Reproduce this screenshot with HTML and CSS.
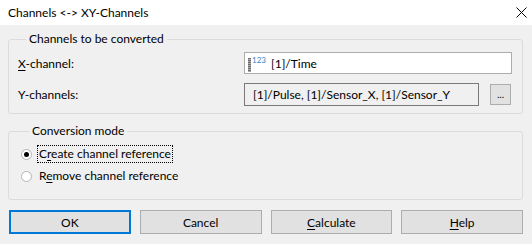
FILE: index.html
```html
<!DOCTYPE html>
<html>
<head>
  <meta charset="UTF-8">
  <title>Channels &lt;-&gt; XY-Channels</title>
  <link rel="stylesheet" href="styles.css">
</head>
<body>
  <div class="titlebar">
    <span class="title">Channels &lt;-&gt; XY-Channels</span>
    <svg class="close" width="11" height="11" viewBox="0 0 11 11">
      <path d="M0.5 0.5 L10.5 10.5 M10.5 0.5 L0.5 10.5" stroke="#000" stroke-width="1" fill="none"/>
    </svg>
  </div>

  <div class="content">
    <fieldset class="group group-channels">
      <legend>Channels to be converted</legend>
      <div class="row">
        <label class="label"><u>X</u>-channel:</label>
        <div class="field field-x">
          <span class="chan-icon"><span class="ruler"></span><span class="num">123</span></span>
          <span class="value">[1]/Time</span>
        </div>
      </div>
      <div class="row row-y">
        <label class="label">Y-channels:</label>
        <div class="field field-y">
          <span class="value">[1]/Pulse, [1]/Sensor_X, [1]/Sensor_Y</span>
        </div>
        <button class="more">...</button>
      </div>
    </fieldset>

    <fieldset class="group group-mode">
      <legend>Conversion mode</legend>
      <div class="radio checked">
        <span class="dot"></span>
        <span class="radio-text focus">C<u>r</u>eate channel reference</span>
      </div>
      <div class="radio">
        <span class="dot"></span>
        <span class="radio-text">R<u>e</u>move channel reference</span>
      </div>
    </fieldset>

    <div class="buttons">
      <button class="btn default">OK</button>
      <button class="btn">Cancel</button>
      <button class="btn"><u>C</u>alculate</button>
      <button class="btn"><u>H</u>elp</button>
    </div>
  </div>
</body>
</html>
```

FILE: styles.css
```css
body {
  margin: 0px;
  background: #f0f0f0;
  color: #000000;
  font-family: Lato, "Noto Sans", sans-serif;
  font-size: 12px;
  width: 532px;
  height: 244px;
  overflow: hidden;
}

u {
  text-decoration: underline;
  text-underline-offset: 2px;
}

.titlebar {
  background: #ffffff;
  height: 25px;
  display: flex;
  align-items: center;
  justify-content: space-between;
  padding: 0px 5px 0px 8px;
}

.title {
  line-height: 16px;
}

.close {
  display: block;
}

.content {
  padding: 0px 9px 0px 8px;
}

.group {
  margin: 0px;
  border: 1px solid #dcdcdc;
  border-radius: 3px;
  min-width: 0;
}

.group legend {
  padding: 0px 3px;
  margin-left: 8px;
  line-height: 16px;
}

.group-channels {
  margin-top: 6px;
  padding: 5px 10px 8px 9px;
}

.row {
  display: flex;
  align-items: center;
  height: 22px;
}

.row-y {
  margin-top: 9px;
}

.label {
  width: 226px;
}

.field {
  height: 22px;
  box-sizing: border-box;
  display: flex;
  align-items: center;
  padding-left: 8px;
}

.field-x {
  flex: 1;
  background: #ffffff;
  border: 1px solid #adadad;
  padding-left: 3px;
}

.field-y {
  width: 235px;
  height: 23px;
  background: #f0f0f0;
  border: 1px solid #7a7a7a;
}

.chan-icon {
  display: flex;
  align-items: flex-start;
  height: 16px;
  width: 23px;
  margin-top: 2px;
}

.ruler {
  width: 3px;
  height: 14px;
  margin-top: 2px;
  background: repeating-linear-gradient(#6d6d6d 0px, #6d6d6d 1px, #a9a9a9 1px, #a9a9a9 2px);
}

.num {
  color: #3c7fc0;
  font-size: 8px;
  line-height: 9px;
  margin-left: 1px;
}

.more {
  margin-left: 11px;
  width: 21px;
  height: 21px;
  padding: 0px;
  background: #e1e1e1;
  border: 1px solid #adadad;
  font-family: inherit;
  font-size: 10px;
  line-height: 10px;
}

.group-mode {
  margin-top: 9px;
  padding: 6px 10px 14px 12px;
}

.radio {
  display: flex;
  align-items: center;
  height: 18px;
}

.radio + .radio {
  margin-top: 4px;
}

.dot {
  width: 11px;
  height: 11px;
  box-sizing: border-box;
  border: 1px solid #b4b4b4;
  border-radius: 50%;
  background: #ffffff;
  display: flex;
  align-items: center;
  justify-content: center;
  margin-right: 5px;
}

.checked .dot::after {
  content: "";
  width: 5px;
  height: 5px;
  border-radius: 50%;
  background: #000000;
}

.radio-text {
  padding: 0px 1px;
  line-height: 16px;
  border: 1px dotted transparent;
}

.radio-text.focus {
  border-color: #000000;
}

.buttons {
  display: grid;
  grid-template-columns: repeat(4, 1fr);
  column-gap: 9px;
  margin-top: 10px;
  padding-left: 1px;
}

.btn {
  height: 24px;
  background: #e1e1e1;
  border: 1px solid #adadad;
  font-family: inherit;
  font-size: 12px;
  color: #000000;
  padding: 0px;
}

.btn.default {
  border: 2px solid #0078d7;
}
```
